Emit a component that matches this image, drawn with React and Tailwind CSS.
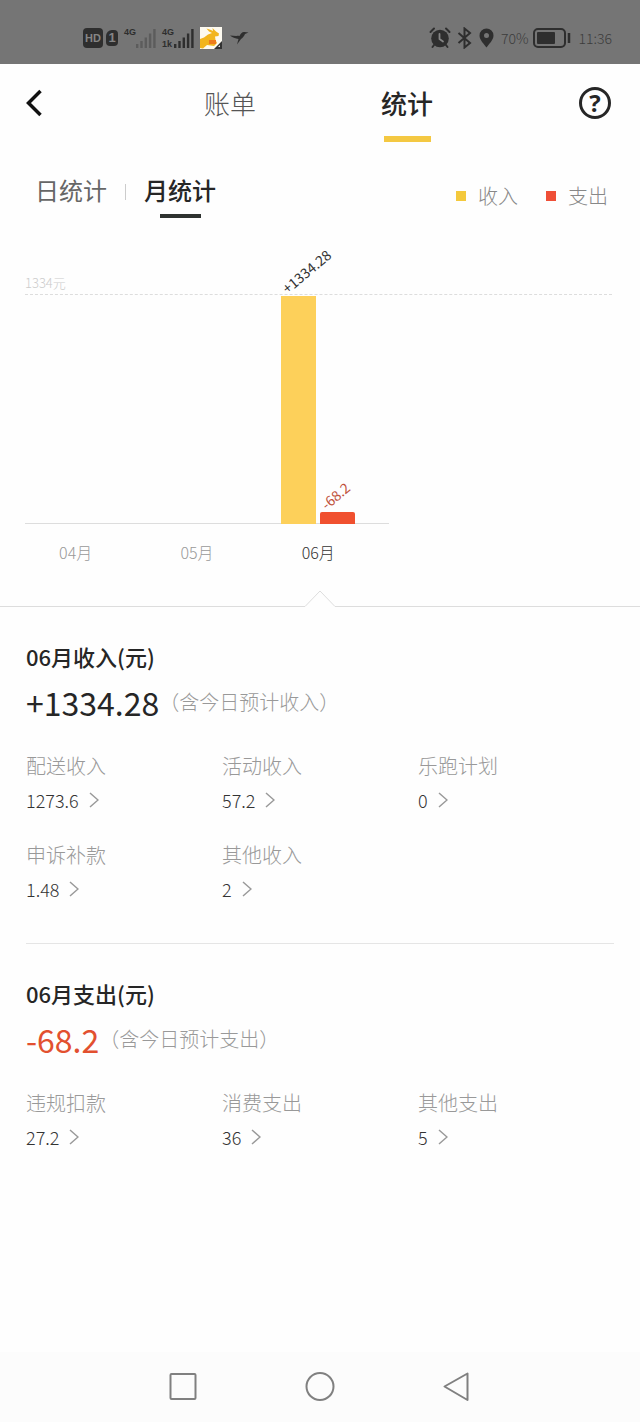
import React, { useState } from 'react';

const months = [
  { label: '04月', income: 0, expense: 0 },
  { label: '05月', income: 0, expense: 0 },
  { label: '06月', income: 1334.28, expense: 68.2 },
];

const incomeItems = [
  { label: '配送收入', value: '1273.6' },
  { label: '活动收入', value: '57.2' },
  { label: '乐跑计划', value: '0' },
  { label: '申诉补款', value: '1.48' },
  { label: '其他收入', value: '2' },
];

const expenseItems = [
  { label: '违规扣款', value: '27.2' },
  { label: '消费支出', value: '36' },
  { label: '其他支出', value: '5' },
];

function SignalBars({ className }) {
  return (
    <svg className={className} width="20" height="20" viewBox="0 0 20 20" fill="currentColor">
      <rect x="0" y="16" width="2.4" height="4" />
      <rect x="4.3" y="13" width="2.4" height="7" />
      <rect x="8.6" y="9.5" width="2.4" height="10.5" />
      <rect x="12.9" y="5.5" width="2.4" height="14.5" />
      <rect x="17.2" y="1" width="2.4" height="19" />
    </svg>
  );
}

function StatusBar() {
  return (
    <div className="flex h-16 items-center justify-between bg-[#757575] pt-3 pr-7 pl-[83px] text-[#2e2e2e]">
      <div className="flex items-center">
        <span className="flex h-5 w-5 items-center justify-center rounded bg-[#2e2e2e] font-['Liberation_Sans',sans-serif] text-[11px] font-bold text-[#858585]">HD</span>
        <span className="ml-[3px] flex h-4 w-3 items-center justify-center rounded-sm rounded-tl-md bg-[#2e2e2e] font-['Liberation_Sans',sans-serif] text-[13px] font-bold text-[#858585]">1</span>
        <span className="ml-[6px] h-6 font-['Liberation_Sans',sans-serif] text-[9px] leading-[12px] font-bold">4G</span>
        <SignalBars className="text-[#5c5c5c]" />
        <span className="ml-[6px] flex h-6 flex-col font-['Liberation_Sans',sans-serif] text-[9px] leading-[12px] font-bold">
          <span>4G</span>
          <span>1k</span>
        </span>
        <SignalBars />
        <svg className="ml-[6px]" width="22" height="22" viewBox="0 0 22 22">
          <rect width="22" height="22" fill="#fdfaf0" />
          <path d="M0 12 4 10.500 8 7.500 12 6 9 4.500 6.500 1.500 11 3 13 4 12.500 1 16 4.500 19 6.500 18.500 9 15 9.500 15.500 13 17 16 14 19 7 18 3 21.500 0 21Z" fill="#f2b51d" />
          <path d="M9 13h7v4H9z" fill="#ee7b1c" />
          <path d="M22 14v8h-8z" fill="#333" />
          <path d="m18 20 2-2v2z" fill="#ddd" />
        </svg>
        <svg className="ml-2" width="19" height="16" viewBox="0 0 19 16" fill="currentColor">
          <path d="M0 5.500C3 5.800 6 6 8.500 5.800L9.500 6C10.500 3.500 12.500 1.500 14.500 2L18.500 2.500 15 4C14 6.500 12.500 8 11 9L7 14.500 8.500 9C5.500 8.500 2 7.500 0 5.500Z" />
        </svg>
      </div>
      <div className="flex items-center">
        <svg width="22" height="22" viewBox="0 0 22 22" fill="none" stroke="currentColor" strokeLinecap="round">
          <circle cx="11" cy="11.500" r="8.800" fill="currentColor" stroke="none" />
          <path d="m1.500 5 3.500-3.500M20.500 5 17 1.500M5 18l-1.500 2M17 18l1.500 2" strokeWidth="2" />
          <path d="M10.500 7v5l3.500 2.500" stroke="#858585" strokeWidth="1.800" />
        </svg>
        <svg className="ml-[6px]" width="15" height="22" viewBox="0 0 15 22" fill="none" stroke="currentColor" strokeWidth="2">
          <path d="m1.500 6 11.500 10-5.500 4.500V1.500L13 6 1.500 16" />
        </svg>
        <svg className="ml-[7px]" width="15" height="20" viewBox="0 0 15 20">
          <path fillRule="evenodd" fill="currentColor" d="M7.500 0.500A7 7 0 0 0 .5 7.500C.5 12 5 16 7.500 19.500 10 16 14.500 12 14.500 7.500A7 7 0 0 0 7.500.5ZM7.500 5a2.500 2.500 0 1 1 0 5 2.500 2.500 0 0 1 0-5Z" />
        </svg>
        <span className="ml-[7px] text-sm font-light text-[#3c3c3c]">70%</span>
        <svg className="ml-1" width="38" height="20" viewBox="0 0 38 20" fill="none" stroke="currentColor">
          <rect x="1" y="1" width="31" height="18" rx="4" strokeWidth="2" />
          <rect x="4" y="4" width="18" height="12" rx="1" fill="currentColor" stroke="none" />
          <path d="M36 5v10" strokeWidth="2.500" />
        </svg>
        <span className="ml-2 text-sm font-light text-[#3c3c3c]">11:36</span>
      </div>
    </div>
  );
}

function Header() {
  return (
    <header className="flex h-[78px] items-center justify-between pr-[29px] pl-[26px]">
      <button aria-label="返回" className="w-8">
        <svg width="16" height="28" viewBox="0 0 16 28" fill="none" stroke="#111" strokeWidth="3.500">
          <path d="M14.500 2 2.500 14l12 12" />
        </svg>
      </button>
      <nav className="grid h-full w-[354px] grid-cols-2 text-[26px] leading-[38px]">
        <button className="flex flex-col items-center pt-5 font-light text-[#555]">账单</button>
        <button className="flex flex-col items-center pt-5 font-medium text-[#262626]">
          统计
          <span className="mt-[14px] h-[6px] w-[47px] bg-[#f4c842]" />
        </button>
      </nav>
      <button aria-label="帮助" className="flex h-8 w-8 items-center justify-center rounded-full border-3 border-[#262626] font-['Open_Sans',sans-serif] text-2xl leading-6 font-bold text-[#262626]">
        ?
      </button>
    </header>
  );
}

function Legend({ color, label }) {
  return (
    <div className="flex items-center gap-3 text-xl font-light text-[#888]">
      <span className={`h-[10px] w-[10px] ${color}`} />
      {label}
    </div>
  );
}

function PeriodTabs() {
  return (
    <div className="flex items-center justify-between pt-8 pr-8 pl-[35px]">
      <div className="flex h-11 gap-[18px] text-2xl leading-8">
        <button className="flex flex-col items-center text-[#666]">日统计</button>
        <span className="mt-[10px] h-4 w-px bg-[#ccc]" />
        <button className="flex flex-col items-center font-medium text-[#262626]">
          月统计
          <span className="mt-2 h-1 w-[41px] bg-[#2e3230]" />
        </button>
      </div>
      <div className="flex gap-7">
        <Legend color="bg-[#f4c93c]" label="收入" />
        <Legend color="bg-[#ef4f37]" label="支出" />
      </div>
    </div>
  );
}

function Bar({ value, max, text, barClass, textClass }) {
  return (
    <div className={`relative -mb-px w-[35px] ${barClass}`} style={{ height: `${(value / max) * 100}%` }}>
      <span className={`absolute bottom-full left-2 origin-bottom-left -rotate-40 text-sm leading-4 ${textClass}`}>{text}</span>
    </div>
  );
}

function Chart({ selected, onSelect }) {
  const max = Math.max(...months.map((m) => m.income));

  return (
    <div className="pr-7 pl-[25px] pt-[55px]">
      <div className="text-[13px] leading-5 font-light text-[#ccc]">{Math.floor(max)}元</div>
      <div className="mt-px border-t border-dashed border-[#ddd]">
        <div className="w-[62%] border-b border-[#ddd]">
          <div className="mr-[10px] -ml-[10px] grid h-[228px] grid-cols-3">
            {months.map((m) => (
              <div key={m.label} className="flex h-full items-end justify-center gap-1">
                {m.income > 0 && (
                  <Bar value={m.income} max={max} text={`+${m.income}`} barClass="bg-[#fdd05a]" textClass="text-[#333]" />
                )}
                {m.expense > 0 && (
                  <Bar value={m.expense} max={max} text={`-${m.expense}`} barClass="rounded-t-xs bg-[#f0502f]" textClass="text-[#c0523c]" />
                )}
              </div>
            ))}
          </div>
        </div>
      </div>
      <div className="mt-4 w-[62%]">
        <div className="mr-[10px] -ml-[10px] grid grid-cols-3 text-base leading-6 font-light">
          {months.map((m, i) => (
            <button key={m.label} onClick={() => onSelect(i)} className={i === selected ? 'text-[#333]' : 'text-[#999]'}>
              {m.label}
            </button>
          ))}
        </div>
      </div>
    </div>
  );
}

function Notch() {
  return (
    <div className="mt-[26px] flex items-end">
      <div className="flex-1 border-b border-[#ddd]" />
      <svg width="30" height="17" viewBox="0 0 30 17" fill="none" stroke="#ddd">
        <path d="M0 16.500 15 1l15 15.500" />
      </svg>
      <div className="flex-1 border-b border-[#ddd]" />
    </div>
  );
}

function Section({ title, amount, amountClass, note, items }) {
  return (
    <section className="pt-[33px] pb-[42px]">
      <h2 className="text-[22px] leading-8 font-medium text-[#262626]">{title}</h2>
      <div className="mt-[6px] flex h-12 items-center">
        <span className={`text-[32px] ${amountClass}`}>{amount}</span>
        <span className="text-xl font-light text-[#999]">{note}</span>
      </div>
      <div className="mt-7 grid grid-cols-3 gap-y-[31px]">
        {items.map((item) => (
          <div key={item.label}>
            <div className="text-xl leading-6 font-light text-[#999]">{item.label}</div>
            <button className="mt-[10px] flex items-center gap-[10px] text-lg leading-6 font-light text-[#333]">
              {item.value}
              <svg width="10" height="16" viewBox="0 0 10 16" fill="none" stroke="#999" strokeWidth="1.500">
                <path d="m1 1 8 7-8 7" />
              </svg>
            </button>
          </div>
        ))}
      </div>
    </section>
  );
}

function NavBar() {
  return (
    <nav className="flex h-[70px] items-center justify-center bg-[#fcfcfc]">
      <button aria-label="最近任务" className="flex w-[137px] justify-center">
        <svg width="30" height="30" viewBox="0 0 30 30" fill="none" stroke="#808080" strokeWidth="2">
          <rect x="2.500" y="2" width="25" height="25" rx="1" />
        </svg>
      </button>
      <button aria-label="主页" className="flex w-[137px] justify-center">
        <svg width="30" height="30" viewBox="0 0 30 30" fill="none" stroke="#808080" strokeWidth="2">
          <circle cx="15" cy="14.500" r="13.500" />
        </svg>
      </button>
      <button aria-label="返回上一页" className="flex w-[137px] justify-center">
        <svg width="30" height="30" viewBox="0 0 30 30" fill="none" stroke="#808080" strokeWidth="2" strokeLinejoin="round">
          <path d="M25.500 1.500v26.500L2.500 14.500Z" />
        </svg>
      </button>
    </nav>
  );
}

function App() {
  const [selected, setSelected] = useState(2);

  return (
    <div className="flex min-h-screen flex-col bg-[#fefefe] font-['Noto_Sans_CJK_SC',sans-serif]">
      <StatusBar />
      <Header />
      <main className="flex-1">
        <PeriodTabs />
        <Chart selected={selected} onSelect={setSelected} />
        <Notch />
        <div className="divide-y divide-[#e5e5e5] px-[26px]">
          <Section
            title="06月收入(元)"
            amount="+1334.28"
            amountClass="text-[#262626]"
            note="（含今日预计收入）"
            items={incomeItems}
          />
          <Section
            title="06月支出(元)"
            amount="-68.2"
            amountClass="text-[#e2502f]"
            note="（含今日预计支出）"
            items={expenseItems}
          />
        </div>
      </main>
      <NavBar />
    </div>
  );
}

export default App;
